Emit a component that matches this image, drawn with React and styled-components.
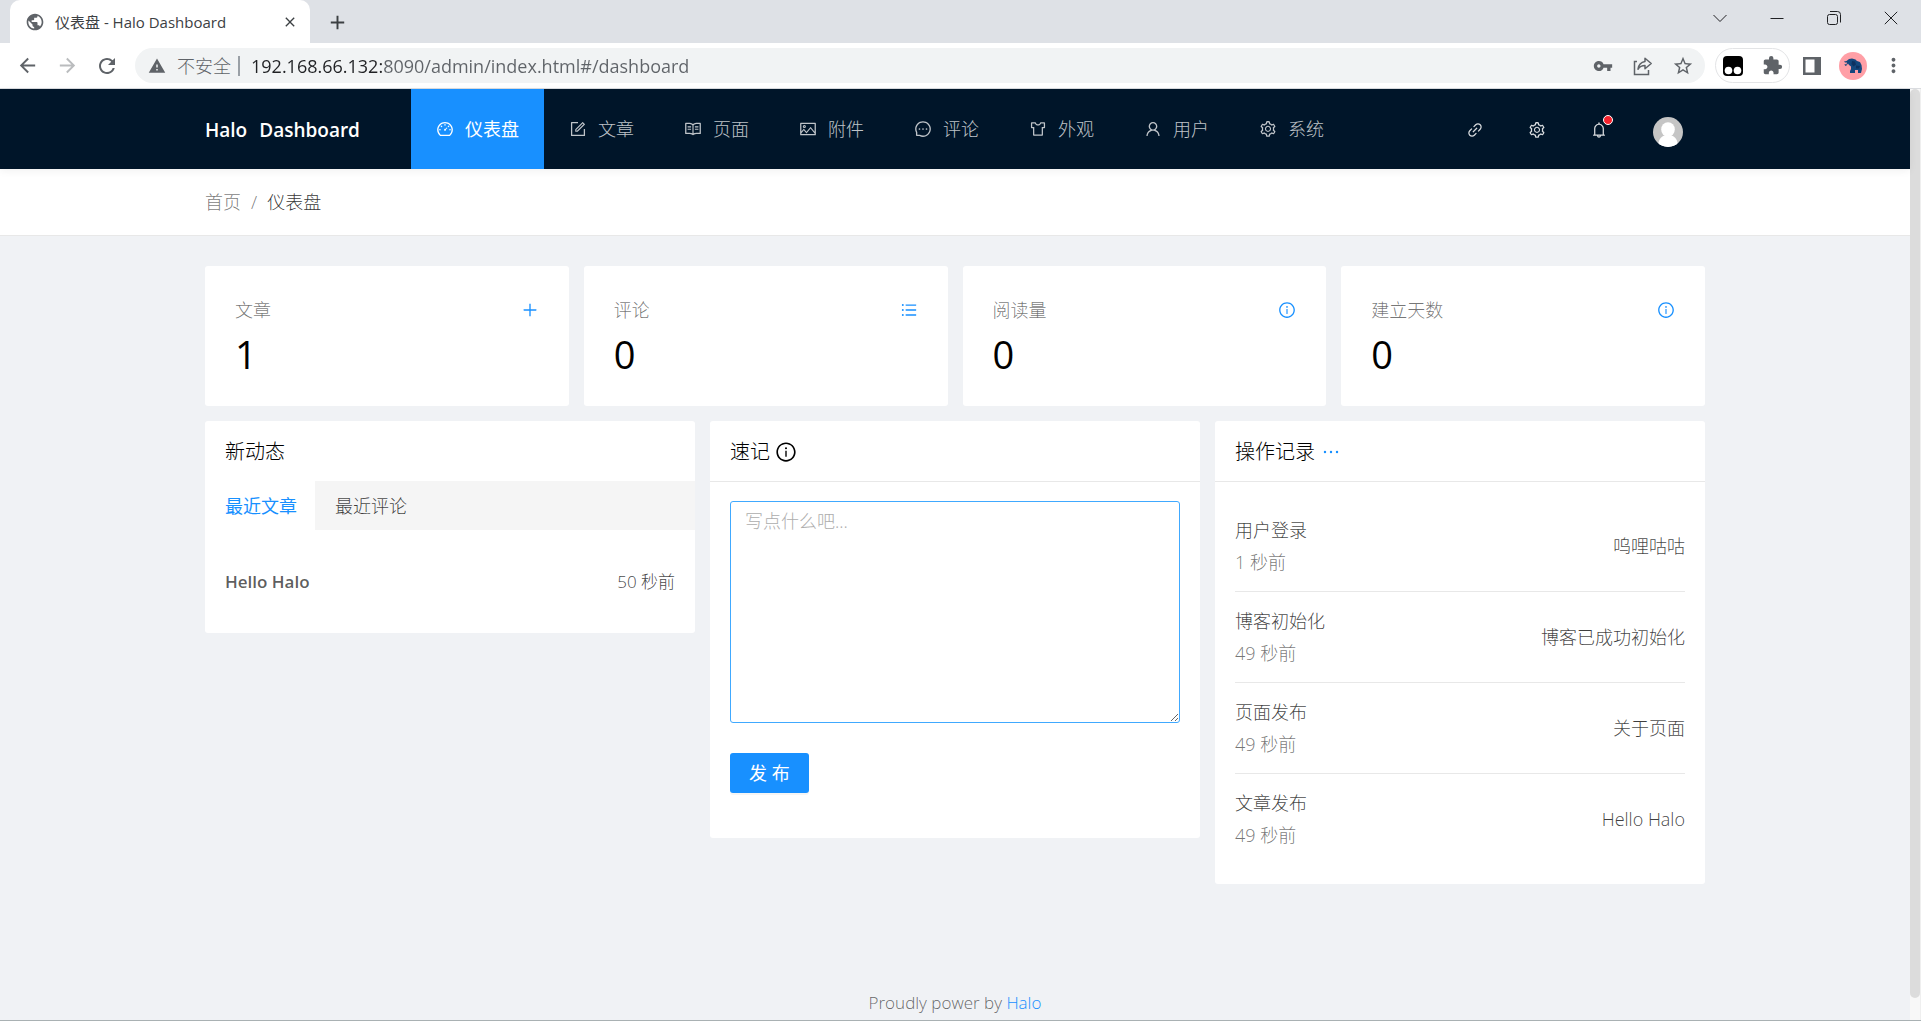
import React, { useState } from 'react';
import styled, { createGlobalStyle, css } from 'styled-components';
import {
  AiOutlineBell,
  AiOutlineDashboard,
  AiOutlineEllipsis,
  AiOutlineForm,
  AiOutlineInfoCircle,
  AiOutlineLink,
  AiOutlineMessage,
  AiOutlinePicture,
  AiOutlinePlus,
  AiOutlineRead,
  AiOutlineSetting,
  AiOutlineSkin,
  AiOutlineUnorderedList,
  AiOutlineUser,
} from 'react-icons/ai';
import {
  MdAdd,
  MdArrowBack,
  MdArrowForward,
  MdClose,
  MdExtension,
  MdMoreVert,
  MdPublic,
  MdRefresh,
  MdStarBorder,
  MdVpnKey,
  MdWarning,
} from 'react-icons/md';

const GlobalStyle = createGlobalStyle`
  * {
    box-sizing: border-box;
  }
  body {
    margin: 0;
    background: #f0f2f5;
    color: rgba(0, 0, 0, 0.75);
    font-family: "Open Sans", "Noto Sans CJK SC", sans-serif;
    font-size: 17px;
    font-weight: 300;
    line-height: 28px;
  }
  button, input, textarea {
    font: inherit;
    color: inherit;
    margin: 0;
  }
  button {
    padding: 0;
    border: none;
    background: none;
    cursor: pointer;
  }
  a {
    color: #1890ff;
    text-decoration: none;
  }
  svg {
    display: block;
    flex: none;
  }
`;

const Window = styled.div`
  min-height: 100vh;
  display: flex;
  flex-direction: column;
  border-bottom: 1px solid #a9b1b3;
`;

/* ---------- browser chrome ---------- */

const TabStrip = styled.div`
  height: 43px;
  display: flex;
  align-items: flex-end;
  padding: 0 2px 0 10px;
  background: #dee1e6;
`;

const BrowserTab = styled.div`
  width: 300px;
  height: 43px;
  display: flex;
  align-items: center;
  gap: 10px;
  padding: 0 12px 0 15px;
  border-radius: 10px 10px 0 0;
  background: #ffffff;
  color: #3c4043;
  font-size: 15px;
  font-weight: 400;
  span {
    flex: 1;
  }
`;

const ChromeButton = styled.button`
  width: ${({ $width }) => $width || 40}px;
  height: 36px;
  display: flex;
  align-items: center;
  justify-content: center;
  color: ${({ $faded }) => ($faded ? '#babcbe' : '#5f6368')};
`;

const NewTab = styled(ChromeButton)`
  margin: 0 auto 3px 7px;
  color: #3c4043;
`;

const WindowButton = styled(ChromeButton)`
  align-self: flex-start;
  color: #202124;
`;

const Toolbar = styled.div`
  height: 46px;
  display: flex;
  align-items: center;
  padding: 0 8px 0 7px;
  border-bottom: 1px solid #dadce0;
  background: #ffffff;
`;

const AddressBar = styled.form`
  flex: 1;
  height: 35px;
  display: flex;
  align-items: center;
  margin: 0 10px 0 8px;
  padding: 0 2px 0 13px;
  border-radius: 18px;
  background: #f1f3f4;
  color: #5f6368;
  font-size: 18px;
  font-weight: 400;
`;

const Insecure = styled.span`
  margin-left: 11px;
  padding-right: 7px;
  border-right: 2px solid #9aa0a6;
  line-height: 20px;
  font-weight: 300;
`;

// the host is drawn darker than the rest of the address
const UrlInput = styled.input`
  flex: 1;
  min-width: 0;
  margin-left: 11px;
  padding: 0;
  border: none;
  outline: none;
  background: linear-gradient(to right, #202124 132px, #5f6368 132px);
  -webkit-background-clip: text;
  background-clip: text;
  -webkit-text-fill-color: transparent;
`;

const ExtensionPill = styled.div`
  width: 75px;
  height: 35px;
  display: flex;
  align-items: center;
  justify-content: space-between;
  border: 1px solid #e3e4e6;
  border-radius: 18px;
`;

/* ---------- admin page ---------- */

const Viewport = styled.div`
  flex: 1;
  display: flex;
  border-right: 1px solid #efefef;
`;

const ScrollTrack = styled.div`
  width: 10px;
  display: flex;
  padding-bottom: 22px;
  background: #f8f8f8;
`;

const ScrollThumb = styled.div`
  flex: 1;
  border-radius: 5px;
  background: #dcdcdc;
`;

const Page = styled.div`
  flex: 1;
  min-width: 0;
  display: flex;
  flex-direction: column;
`;

const Container = styled.div`
  width: 100%;
  max-width: 1500px;
  margin: 0 auto;
`;

const Header = styled.header`
  position: relative;
  background: #001529;
  box-shadow: 0 2px 8px rgba(0, 0, 0, 0.06);
`;

const HeaderRow = styled(Container)`
  height: 80px;
  display: flex;
`;

const Brand = styled.h1`
  width: 206px;
  margin: 0;
  display: flex;
  align-items: center;
  gap: 12px;
  padding-top: 2px;
  color: #ffffff;
  font-size: 19px;
  font-weight: 600;
`;

const Menu = styled.nav`
  display: flex;
  flex: 1;
`;

const MenuItem = styled.a`
  display: flex;
  align-items: center;
  gap: 11px;
  padding: 0 25px;
  color: ${({ $active }) => ($active ? '#ffffff' : 'rgba(255, 255, 255, 0.75)')};
  background: ${({ $active }) => ($active ? '#1890ff' : 'transparent')};
  font-size: 18px;
  font-weight: ${({ $active }) => ($active ? 400 : 300)};
`;

const Tools = styled.div`
  display: flex;
  align-items: center;
`;

const ToolButton = styled.button`
  position: relative;
  width: ${({ $wide }) => ($wide ? 75 : 62)}px;
  height: 80px;
  display: flex;
  align-items: center;
  justify-content: center;
  padding-top: ${({ $wide }) => ($wide ? 5 : 1)}px;
  color: rgba(255, 255, 255, 0.85);
`;

const Dot = styled.i`
  position: absolute;
  top: 26px;
  right: 17px;
  width: 10px;
  height: 10px;
  border: 1px solid #ffffff;
  border-radius: 50%;
  background: #f5222d;
`;

const PageHeader = styled.div`
  border-bottom: 1px solid #e8e8e8;
  background: #ffffff;
`;

const Breadcrumb = styled(Container)`
  height: 66px;
  display: flex;
  align-items: center;
  gap: 10px;
  color: rgba(0, 0, 0, 0.55);
  font-size: 18px;
  a {
    color: inherit;
  }
  strong {
    color: rgba(0, 0, 0, 0.8);
    font-weight: 300;
  }
`;

const Content = styled(Container)`
  padding-top: 30px;
  display: flex;
  flex-direction: column;
  gap: 15px;
`;

const StatGrid = styled.div`
  display: grid;
  grid-template-columns: repeat(4, 1fr);
  gap: 15px;
`;

const Card = styled.section`
  border-radius: 3px;
  background: #ffffff;
`;

const StatCard = styled(Card)`
  height: 140px;
  padding: 30px;
`;

const StatHead = styled.div`
  display: flex;
  align-items: center;
  justify-content: space-between;
  color: rgba(0, 0, 0, 0.55);
  font-size: 18px;
  button {
    color: #1890ff;
  }
`;

const StatValue = styled.div`
  margin-top: 6px;
  color: #000000;
  font-size: 38px;
  font-weight: 400;
  line-height: 48px;
`;

const PanelGrid = styled.div`
  display: grid;
  grid-template-columns: repeat(3, 1fr);
  align-items: start;
  gap: 15px;
`;

const PanelTitle = styled.h2`
  height: 60px;
  margin: 0;
  display: flex;
  align-items: center;
  gap: 5px;
  padding: 2px 20px 0;
  color: #000000;
  font-size: 20px;
  font-weight: 300;
  ${({ $plain }) => !$plain && css`
    box-shadow: 0 1px 0 #e8e8e8;
  `}
`;

const PanelBody = styled.div`
  padding: 20px;
`;

const Tabs = styled.div`
  height: 49px;
  display: flex;
  background: #f5f5f5;
`;

const Tab = styled.button`
  padding: 0 18px 0 20px;
  background: ${({ $active }) => ($active ? '#ffffff' : 'transparent')};
  color: ${({ $active }) => ($active ? '#1890ff' : 'inherit')};
  font-size: 18px;
  font-weight: ${({ $active }) => ($active ? 400 : 300)};
`;

const PostRow = styled.div`
  height: 63px;
  display: flex;
  justify-content: space-between;
  align-items: center;
  a {
    color: rgba(0, 0, 0, 0.65);
    font-weight: 600;
  }
`;

const Note = styled.textarea`
  width: 100%;
  height: 222px;
  display: block;
  margin-bottom: 30px;
  padding: 5px 14px;
  border: 1px solid #40a9ff;
  border-radius: 3px;
  outline: none;
  font-size: 18px;
  resize: vertical;
  &::placeholder {
    color: #adadad;
  }
`;

const Publish = styled.button`
  height: 40px;
  margin-bottom: 25px;
  display: block;
  padding: 0 19px;
  border-radius: 3px;
  background: #1890ff;
  box-shadow: 0 2px 0 rgba(0, 0, 0, 0.04);
  color: #ffffff;
  font-size: 18px;
  font-weight: 400;
`;

const LogList = styled.ul`
  margin: 0;
  padding: 0;
  list-style: none;
`;

const LogRow = styled.li`
  display: flex;
  justify-content: space-between;
  align-items: center;
  padding: 15px 0;
  font-size: 18px;
  & + & {
    border-top: 1px solid #e8e8e8;
  }
`;

const LogMeta = styled.div`
  display: flex;
  flex-direction: column;
  gap: 4px;
  small {
    color: rgba(0, 0, 0, 0.55);
    font-size: 18px;
  }
`;

const Footer = styled.footer`
  margin-top: auto;
  padding: 30px 0 3px;
  text-align: center;
  color: rgba(0, 0, 0, 0.6);
`;

/* ---------- drawings ---------- */

const ShareIcon = () => (
  <svg width="20" height="20" viewBox="0 0 20 20" fill="none" stroke="currentColor" strokeWidth="1.5">
    <path d="M4 5.5H1.5v13h14V14" />
    <path d="M12 2.2l6.2 5.3-6.2 5.3V9.6c-3 0-5.2 1-7 3.6.5-4 2.8-7 7-7.7z" strokeLinejoin="round" />
  </svg>
);

const MonkeyIcon = () => (
  <svg width="20" height="20" viewBox="0 0 20 20">
    <rect x="0" y="0" width="20" height="20" rx="4" fill="#000" />
    <circle cx="5.5" cy="14.5" r="3.8" fill="#fff" />
    <circle cx="14.5" cy="14.5" r="3.8" fill="#fff" />
  </svg>
);

const SidePanelIcon = () => (
  <svg width="18" height="18" viewBox="0 0 18 18">
    <path fill="currentColor" fillRule="evenodd" d="M0 0h18v18H0zM2.5 2.5v13h9v-13z" />
  </svg>
);

const ElephantIcon = () => (
  <svg width="28" height="28" viewBox="0 0 28 28">
    <circle cx="14" cy="14" r="14" fill="#ff9fa6" />
    <path
      fill="#14477d"
      d="M5 9.5L7.5 9 10 7l3-.5 3.5 1L18 9l3 1 1.5 3 .5 4-1 4h-3v-3h-3v3h-5v-2l1-2v-2.500l-2-1.500-1-1.500-2 2.500L6 13.500l-.5-1.500 2 .5.500-2H6z"
    />
    <path fill="#0d3160" d="M13 9l3 .5 1 3-2.500 2-2-2.500zM17 13.500l4 .5-1 2.500h-3z" />
  </svg>
);

const AvatarIcon = () => (
  <svg width="30" height="30" viewBox="0 0 30 30">
    <defs>
      <clipPath id="avatar-clip">
        <circle cx="15" cy="15" r="15" />
      </clipPath>
    </defs>
    <g clipPath="url(#avatar-clip)">
      <rect width="30" height="30" fill="#c5c5c5" />
      <ellipse cx="15" cy="12.5" rx="6.8" ry="7.3" fill="#fff" />
      <path fill="#fff" d="M5 30c0-7 3-10.500 6.500-11.500h7C22 19.500 25 23 25 30z" />
    </g>
  </svg>
);

const ControlIcon = ({ d }) => (
  <svg width="14" height="14" viewBox="0 0 14 14" fill="none" stroke="currentColor" strokeWidth="1">
    <path d={d} />
  </svg>
);

const windowControls = [
  ['搜索标签页', 'M.5 4l6.500 6.500L13.500 4'],
  ['最小化', 'M.5 7.500h13'],
  ['还原', 'M2.500 3.500h6q2 0 2 2v6q0 2-2 2h-6q-2 0-2-2v-6q0-2 2-2zM3 .5h7.500q3 0 3 3v8'],
  ['关闭', 'M.8.8l12.400 12.400M13.200.8L.8 13.200'],
];

const menu = [
  ['仪表盘', AiOutlineDashboard],
  ['文章', AiOutlineForm],
  ['页面', AiOutlineRead],
  ['附件', AiOutlinePicture],
  ['评论', AiOutlineMessage],
  ['外观', AiOutlineSkin],
  ['用户', AiOutlineUser],
  ['系统', AiOutlineSetting],
];

const stats = [
  ['文章', 1, AiOutlinePlus],
  ['评论', 0, AiOutlineUnorderedList],
  ['阅读量', 0, AiOutlineInfoCircle],
  ['建立天数', 0, AiOutlineInfoCircle],
];

const logs = [
  ['用户登录', '1 秒前', '呜哩咕咕'],
  ['博客初始化', '49 秒前', '博客已成功初始化'],
  ['页面发布', '49 秒前', '关于页面'],
  ['文章发布', '49 秒前', 'Hello Halo'],
];

const BrowserChrome = () => (
  <>
    <TabStrip>
      <BrowserTab>
        <MdPublic size={20} color="#5f6368" />
        <span>仪表盘 - Halo Dashboard</span>
        <ChromeButton $width={16} aria-label="关闭标签页">
          <MdClose size={16} color="#3c4043" />
        </ChromeButton>
      </BrowserTab>
      <NewTab aria-label="新标签页"><MdAdd size={23} /></NewTab>
      {windowControls.map(([label, d]) => (
        <WindowButton key={label} $width={57} aria-label={label}>
          <ControlIcon d={d} />
        </WindowButton>
      ))}
    </TabStrip>
    <Toolbar>
      <ChromeButton aria-label="后退"><MdArrowBack size={23} /></ChromeButton>
      <ChromeButton $faded aria-label="前进"><MdArrowForward size={23} /></ChromeButton>
      <ChromeButton aria-label="刷新"><MdRefresh size={24} /></ChromeButton>
      <AddressBar onSubmit={(evt) => evt.preventDefault()}>
        <MdWarning size={18} />
        <Insecure>不安全</Insecure>
        <UrlInput aria-label="地址" defaultValue="192.168.66.132:8090/admin/index.html#/dashboard" />
        <ChromeButton type="button" aria-label="密码"><MdVpnKey size={20} /></ChromeButton>
        <ChromeButton type="button" aria-label="分享"><ShareIcon /></ChromeButton>
        <ChromeButton type="button" aria-label="收藏"><MdStarBorder size={22} /></ChromeButton>
      </AddressBar>
      <ExtensionPill>
        <ChromeButton $width={34} aria-label="脚本管理"><MonkeyIcon /></ChromeButton>
        <ChromeButton $width={34} aria-label="扩展程序"><MdExtension size={21} /></ChromeButton>
      </ExtensionPill>
      <ChromeButton $width={43} aria-label="侧边栏"><SidePanelIcon /></ChromeButton>
      <ChromeButton aria-label="个人资料"><ElephantIcon /></ChromeButton>
      <ChromeButton aria-label="菜单"><MdMoreVert size={23} /></ChromeButton>
    </Toolbar>
  </>
);

const AdminHeader = () => (
  <Header>
    <HeaderRow>
      <Brand>
        <span>Halo</span>
        <span>Dashboard</span>
      </Brand>
      <Menu>
        {menu.map(([label, Icon], i) => (
          <MenuItem key={label} href="#/dashboard" $active={i === 0}>
            <Icon size={18} />
            {label}
          </MenuItem>
        ))}
      </Menu>
      <Tools>
        <ToolButton aria-label="链接"><AiOutlineLink size={18} /></ToolButton>
        <ToolButton aria-label="设置"><AiOutlineSetting size={18} /></ToolButton>
        <ToolButton aria-label="通知">
          <AiOutlineBell size={18} />
          <Dot />
        </ToolButton>
        <ToolButton $wide aria-label="账户"><AvatarIcon /></ToolButton>
      </Tools>
    </HeaderRow>
  </Header>
);

const RecentPanel = () => {
  const [tab, setTab] = useState(0);
  return (
    <Card>
      <PanelTitle $plain>新动态</PanelTitle>
      <Tabs>
        {['最近文章', '最近评论'].map((label, i) => (
          <Tab key={label} $active={tab === i} onClick={() => setTab(i)}>{label}</Tab>
        ))}
      </Tabs>
      <PanelBody>
        {tab === 0 && (
          <PostRow>
            <a href="#/posts/hello-halo">Hello Halo</a>
            <span>50 秒前</span>
          </PostRow>
        )}
      </PanelBody>
    </Card>
  );
};

const JournalPanel = () => (
  <Card>
    <PanelTitle>速记 <AiOutlineInfoCircle size={22} /></PanelTitle>
    <PanelBody>
      <Note aria-label="速记" placeholder="写点什么吧..." />
      <Publish>发 布</Publish>
    </PanelBody>
  </Card>
);

const LogPanel = () => (
  <Card>
    <PanelTitle>
      操作记录
      <a href="#/logs" aria-label="更多"><AiOutlineEllipsis size={22} /></a>
    </PanelTitle>
    <PanelBody>
      <LogList>
        {logs.map(([type, time, content]) => (
          <LogRow key={type}>
            <LogMeta>
              <span>{type}</span>
              <small>{time}</small>
            </LogMeta>
            <span>{content}</span>
          </LogRow>
        ))}
      </LogList>
    </PanelBody>
  </Card>
);

const App = () => (
  <>
    <GlobalStyle />
    <Window>
      <BrowserChrome />
      <Viewport>
        <Page>
          <AdminHeader />
          <PageHeader>
            <Breadcrumb>
              <a href="#/">首页</a>
              <span>/</span>
              <strong>仪表盘</strong>
            </Breadcrumb>
          </PageHeader>
          <Content>
            <StatGrid>
              {stats.map(([label, value, Icon]) => (
                <StatCard key={label}>
                  <StatHead>
                    {label}
                    <button aria-label={`${label}操作`}><Icon size={18} /></button>
                  </StatHead>
                  <StatValue>{value}</StatValue>
                </StatCard>
              ))}
            </StatGrid>
            <PanelGrid>
              <RecentPanel />
              <JournalPanel />
              <LogPanel />
            </PanelGrid>
          </Content>
          <Footer>
            Proudly power by <a href="#/about">Halo</a>
          </Footer>
        </Page>
        <ScrollTrack><ScrollThumb /></ScrollTrack>
      </Viewport>
    </Window>
  </>
);

export default App;
